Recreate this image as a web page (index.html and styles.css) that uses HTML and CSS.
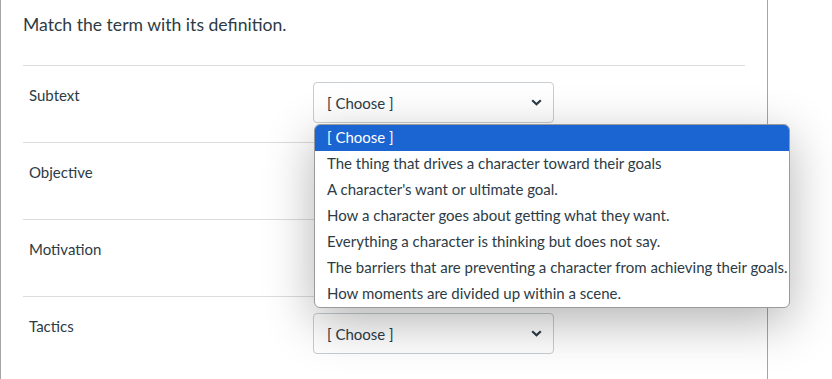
FILE: index.html
```html
<!doctype html>
<html>
<head>
<title>Quiz</title>
<link rel="stylesheet" href="styles.css">
</head>
<body>
	<div id="question">
		<div class="questionText">Match the term with its definition.</div>

		<div class="answer">
			<div class="term">Subtext</div>
			<div class="pick">
				<div class="select">
					<span>[ Choose ]</span>
					<svg class="chev" width="11" height="7" viewBox="0 0 11 7"><path d="M1.2 1.2 L5.5 5.3 L9.8 1.2" fill="none" stroke="#2d3b45" stroke-width="2.2"/></svg>
				</div>
				<div id="dropList">
					<div class="opt selected">[ Choose ]</div>
					<div class="opt">The thing that drives a character toward their goals</div>
					<div class="opt">A character's want or ultimate goal.</div>
					<div class="opt">How a character goes about getting what they want.</div>
					<div class="opt">Everything a character is thinking but does not say.</div>
					<div class="opt">The barriers that are preventing a character from achieving their goals.</div>
					<div class="opt">How moments are divided up within a scene.</div>
				</div>
			</div>
		</div>

		<div class="answer">
			<div class="term">Objective</div>
		</div>

		<div class="answer">
			<div class="term">Motivation</div>
		</div>

		<div class="answer last">
			<div class="term">Tactics</div>
			<div class="pick">
				<div class="select">
					<span>[ Choose ]</span>
					<svg class="chev" width="11" height="7" viewBox="0 0 11 7"><path d="M1.2 1.2 L5.5 5.3 L9.8 1.2" fill="none" stroke="#2d3b45" stroke-width="2.2"/></svg>
				</div>
			</div>
		</div>
	</div>
</body>
</html>
```

FILE: styles.css
```css
html {
  height: 100%;
}
body {
  margin: 0;
  height: 100%;
  background-color: #fff;
  font-family: Lato, "Open Sans", sans-serif;
  color: #2d3b45;
  overflow: hidden;
}

#question {
  width: 722px;
  height: 100%;
  padding: 0 22px;
  border-left: 1px solid #a5a5a5;
  border-right: 1px solid #a5a5a5;
}

.questionText {
  font-size: 17.6px;
  padding-top: 14px;
  height: 66px;
  box-sizing: border-box;
  border-bottom: 1px solid #dcdcdc;
}

.answer {
  display: flex;
  height: 77px;
  box-sizing: border-box;
  border-bottom: 1px solid #dcdcdc;
}
.answer.last {
  border-bottom: none;
}

.term {
  width: 284px;
  padding: 20px 0 0 6px;
  font-size: 15px;
}

.pick {
  position: relative;
  padding-top: 16px;
}

.select {
  display: flex;
  align-items: center;
  justify-content: space-between;
  width: 241px;
  height: 41px;
  box-sizing: border-box;
  padding: 0 11px 0 13px;
  border: 1px solid #c7cdd1;
  border-radius: 4px;
  background-color: #fff;
  font-size: 15px;
}

/* the opened native list */
#dropList {
  position: absolute;
  top: 58px;
  left: 1px;
  z-index: 2;
  width: 476px;
  box-sizing: border-box;
  border: 1px solid #9a9a9a;
  border-radius: 6px;
  background-color: #fff;
  overflow: hidden;
  box-shadow: 0 14px 50px rgba(0, 0, 0, 0.3);
}
.opt {
  height: 26px;
  line-height: 25px;
  padding-left: 12px;
  font-size: 15px;
  white-space: nowrap;
}
.opt.selected {
  background-color: #1b65d2;
  color: #fff;
}
```
